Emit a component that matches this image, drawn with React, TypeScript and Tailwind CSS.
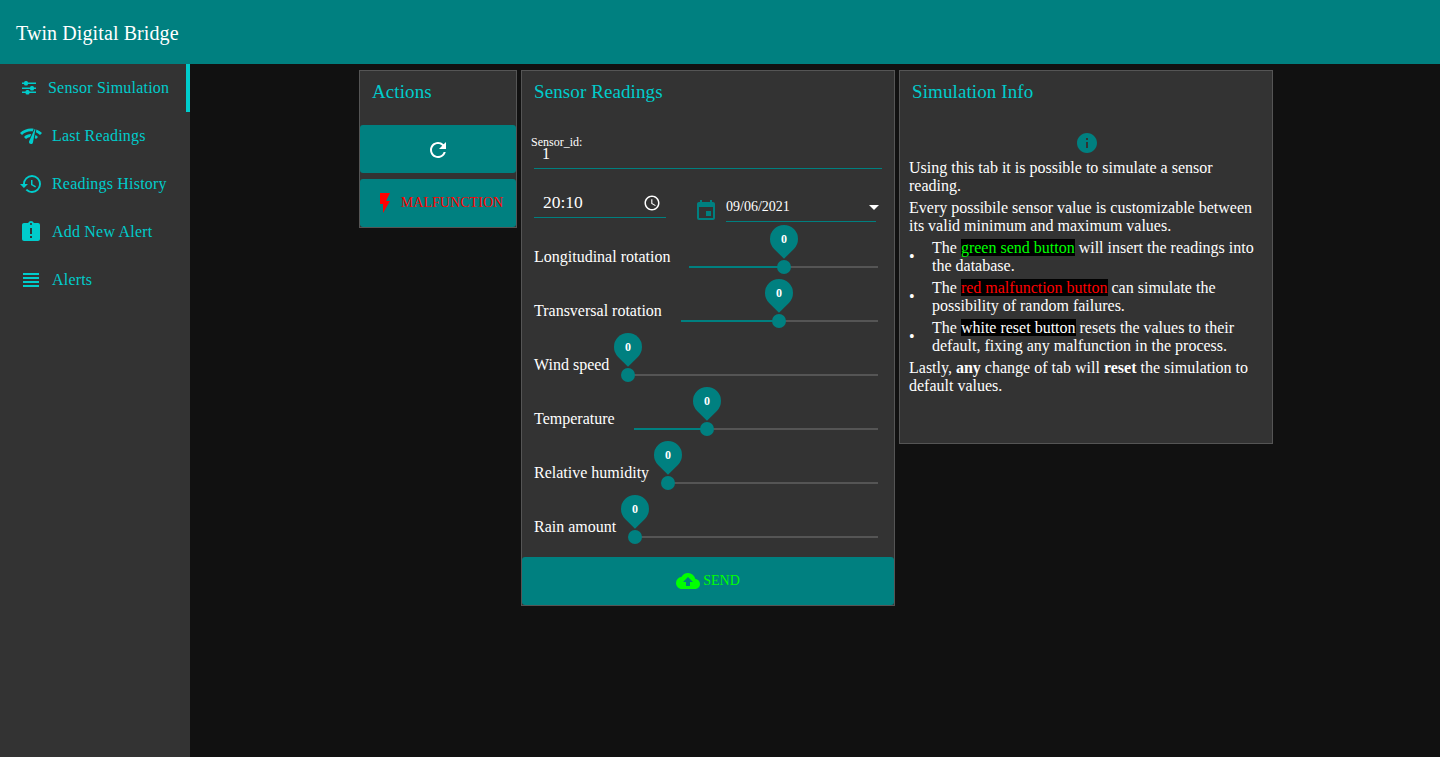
import type { ReactNode } from "react";
import {
  MdAccessTime,
  MdArrowDropDown,
  MdAssignmentLate,
  MdCloudUpload,
  MdEvent,
  MdFlashOn,
  MdHistory,
  MdInfo,
  MdNetworkCheck,
  MdRefresh,
  MdViewHeadline,
} from "react-icons/md";

const SlidersIcon = ({ className }: { className?: string }) => (
  <svg viewBox="0 0 18 18" fill="currentColor" className={className}>
    <rect x="2" y="3.5" width="14" height="1.5" />
    <rect x="2" y="8.5" width="14" height="1.5" />
    <rect x="2" y="12.5" width="14" height="1.5" />
    <rect x="4" y="2" width="4" height="4.5" rx="1.5" />
    <rect x="10" y="7" width="4" height="4.5" rx="1.5" />
    <rect x="5.5" y="11" width="4" height="4.5" rx="1.5" />
  </svg>
);

const navItems = [
  { label: "Sensor Simulation", icon: SlidersIcon, active: true },
  { label: "Last Readings", icon: MdNetworkCheck },
  { label: "Readings History", icon: MdHistory },
  { label: "Add New Alert", icon: MdAssignmentLate },
  { label: "Alerts", icon: MdViewHeadline },
];

const sliders = [
  { label: "Longitudinal rotation", percent: 50 },
  { label: "Transversal rotation", percent: 50 },
  { label: "Wind speed", percent: 0 },
  { label: "Temperature", percent: 30 },
  { label: "Relative humidity", percent: 0 },
  { label: "Rain amount", percent: 0 },
];

const Sidebar = () => (
  <aside className="w-[190px] shrink-0 bg-[#333333]">
    {navItems.map((item) => {
      const Icon = item.icon;
      return (
        <div
          key={item.label}
          className={`flex h-12 items-center pl-5 text-base tracking-[0.2px] text-[#00cccc] ${
            item.active ? "border-r-4 border-[#00cccc]" : ""
          }`}
        >
          {item.active ? (
            <Icon className="mr-[10px] size-[18px]" />
          ) : (
            <Icon className="-ml-px mr-[9px] size-6" />
          )}
          {item.label}
        </div>
      );
    })}
  </aside>
);

const CardTitle = ({ children }: { children: string }) => (
  <h2 className="pl-3 pt-[10px] text-[19px] leading-[22px] tracking-[0.1px] text-[#00cccc]">{children}</h2>
);

const ActionsCard = () => (
  <section className="flex h-[158px] w-[158px] flex-col border border-[#555555] bg-[#333333]">
    <CardTitle>Actions</CardTitle>
    <div className="mt-[22px] flex flex-col gap-[6px]">
      <button className="flex h-12 items-center justify-center rounded-[3px] bg-[#008080] text-white">
        <MdRefresh className="mt-px size-6" />
      </button>
      <button className="flex h-12 items-center justify-center rounded-[3px] bg-[#008080] text-sm tracking-[0.05px] text-[#ff0000]">
        <MdFlashOn className="mr-1 size-6" />
        MALFUNCTION
      </button>
    </div>
  </section>
);

const SliderRow = ({ label, percent }: { label: string; percent: number }) => (
  <div className="flex h-[54px] items-center">
    <span className="mr-[19px] shrink-0 whitespace-nowrap text-base leading-[18px] text-white">{label}</span>
    <div className="relative mt-5 h-[2px] flex-1 bg-[#555555]">
      <div className="h-full bg-[#008080]" style={{ width: `${percent}%` }} />
      <div className="absolute top-0 size-0" style={{ left: `${percent}%` }}>
        <div className="absolute -left-[7px] -top-[6px] size-[14px] rounded-full bg-[#008080]" />
        <div className="absolute -left-[14px] -top-[41px] flex size-7 rotate-[-45deg] items-center justify-center rounded-[50%_50%_50%_0] bg-[#008080]">
          <span className="rotate-45 text-xs font-bold text-white">0</span>
        </div>
      </div>
    </div>
  </div>
);

const SensorCard = () => (
  <section className="flex h-[536px] w-[374px] flex-col border border-[#555555] bg-[#333333]">
    <CardTitle>Sensor Readings</CardTitle>
    <div className="flex-1 px-3">
      <div className="relative mt-[33px] h-[33px] border-b border-[#008080]">
        <span className="absolute -left-[3px] top-0 text-xs leading-none text-white">Sensor_id:</span>
        <span className="absolute left-[8px] top-[8px] text-base leading-5 text-white">1</span>
      </div>
      <div className="mt-4 flex items-start">
        <div className="flex h-[33px] w-[132px] items-center justify-between border-b border-[#008080] pl-[9px] pr-[5px] pt-[3px] text-white">
          <span className="text-[17.5px]">20:10</span>
          <MdAccessTime className="size-[18px]" />
        </div>
        <MdEvent className="ml-[28px] mt-[14px] size-6 text-[#008080]" />
        <div className="ml-[8px] mt-[4px] flex h-[33px] w-[150px] items-center justify-between border-b border-[#008080] pt-[3px] text-sm text-white">
          <span>09/06/2021</span>
          <MdArrowDropDown className="-mr-[10px] size-6" />
        </div>
      </div>
      <div className="mr-[4px] mt-[7px]">
        {sliders.map((slider) => (
          <SliderRow key={slider.label} {...slider} />
        ))}
      </div>
    </div>
    <button className="flex h-12 items-center justify-center rounded-[3px] bg-[#008080] text-sm text-[#00ff00]">
      <MdCloudUpload className="mr-[3px] size-6" />
      SEND
    </button>
  </section>
);

const Bullet = ({ children }: { children: ReactNode }) => (
  <li className="mt-1 flex items-center">
    <span className="w-[23px] shrink-0">•</span>
    <div>{children}</div>
  </li>
);

const InfoCard = () => (
  <section className="h-[374px] w-[374px] border border-[#555555] bg-[#333333]">
    <CardTitle>Simulation Info</CardTitle>
    <div className="mt-[28px] flex justify-center pl-[2px]">
      <MdInfo className="size-6 text-[#008080]" />
    </div>
    <div className="mt-1 px-[9px] text-base leading-[18px] text-white">
      <p>Using this tab it is possible to simulate a sensor reading.</p>
      <p className="mt-1">Every possibile sensor value is customizable between its valid minimum and maximum values.</p>
      <ul>
        <Bullet>
          The <span className="bg-black text-[#00ff00]">green send button</span> will insert the readings into the database.
        </Bullet>
        <Bullet>
          The <span className="bg-black text-[#ff0000]">red malfunction button</span> can simulate the possibility of random failures.
        </Bullet>
        <Bullet>
          The <span className="bg-black text-white">white reset button</span> resets the values to their default, fixing any malfunction in the process.
        </Bullet>
      </ul>
      <p className="mt-1">
        Lastly, <b>any</b> change of tab will <b>reset</b> the simulation to default values.
      </p>
    </div>
  </section>
);

export default function App() {
  return (
    <div className="flex h-[757px] flex-col overflow-hidden bg-[#111111] font-['Liberation_Serif',serif]">
      <header className="flex h-16 shrink-0 items-center bg-[#008080] pl-4 pt-px text-xl tracking-[0.1px] text-white">Twin Digital Bridge</header>
      <div className="flex flex-1">
        <Sidebar />
        <main className="flex flex-1 items-start justify-center gap-1 pl-[2px] pt-[6px]">
          <ActionsCard />
          <SensorCard />
          <InfoCard />
        </main>
      </div>
    </div>
  );
}
